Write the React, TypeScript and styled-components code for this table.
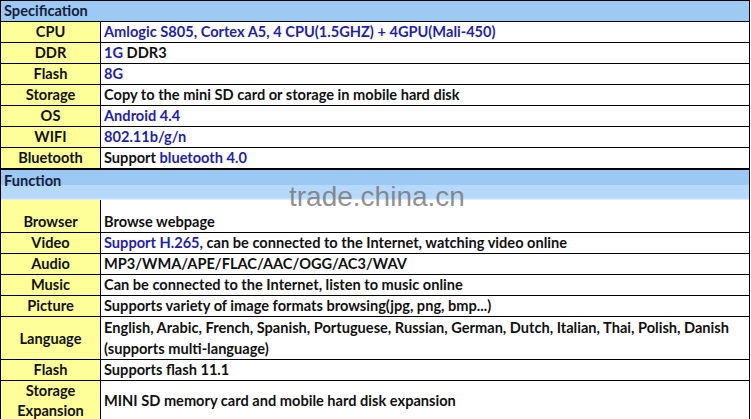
import React from 'react'
import styled, { createGlobalStyle } from 'styled-components'

const GlobalStyle = createGlobalStyle`
    html, body {
        margin: 0;
        padding: 0;
        background: #FFFFFF;
    }
    body {
        font-family: Lato, 'Open Sans', sans-serif;
        width: 751px;
        height: 419px;
        overflow: hidden;
    }
`

type SpecRowType = {
    label: Array<string>
    value: Array<React.ReactNode>
    lineHeight?: number
}

const Sheet = styled.div`
    position: relative;
    width: 750px;
    border-left: 1px solid #000;
    border-right: 1px solid #000;
    box-sizing: border-box;
    font-size: 14.6px;
    font-weight: 700;
    color: #111;
`

const SectionHeader = styled.div<{ $first?: boolean }>`
    height: ${props => props.$first ? '20px' : '30px'};
    border-top: 1px solid #000;
    border-bottom: ${props => props.$first ? '1px solid #000' : 'none'};
    padding-left: 3px;
    line-height: ${props => props.$first ? '20px' : '21px'};
    color: #14203a;
    background: ${props => props.$first
        ? '#9dc9f5'
        : 'linear-gradient(#9cc8f4 0, #9cc8f4 15px, #b6d8fa 15px, #b6d8fa 28px, #e8f2fd 30px)'};
`

const Row = styled.div<{ $open?: boolean; $height?: number; $line?: number }>`
    display: grid;
    grid-template-columns: 100px 1fr;
    min-height: ${props => props.$height ?? 20}px;
    border-bottom: ${props => props.$open ? 'none' : '1px solid #000'};
    line-height: ${props => props.$line ?? 20}px;
`

const Label = styled.div`
    display: flex;
    flex-direction: column;
    justify-content: center;
    align-items: center;
    text-align: center;
    background: #ffff99;
    border-right: 1px solid #000;
`

const Value = styled.div`
    display: flex;
    flex-direction: column;
    justify-content: center;
    padding-left: 3px;
    white-space: nowrap;
`

const Hl = styled.span`
    color: #1f1fae;
`

const Watermark = styled.div`
    position: absolute;
    left: 288px;
    top: 181px;
    font-family: 'Liberation Sans', Arial, sans-serif;
    font-size: 28px;
    font-weight: 400;
    color: rgba(110, 110, 110, 0.75);
    pointer-events: none;
`

const specification: Array<SpecRowType> = [
    { label: ['CPU'], value: [<Hl>Amlogic S805, Cortex A5, 4 CPU(1.5GHZ) + 4GPU(Mali-450)</Hl>] },
    { label: ['DDR'], value: [<><Hl>1G</Hl> DDR3</>] },
    { label: ['Flash'], value: [<Hl>8G</Hl>] },
    { label: ['Storage'], value: ['Copy to the mini SD card or storage in mobile hard disk'] },
    { label: ['OS'], value: [<Hl>Android 4.4</Hl>] },
    { label: ['WIFI'], value: [<Hl>802.11b/g/n</Hl>] },
    { label: ['Bluetooth'], value: [<>Support <Hl>bluetooth 4.0</Hl></>] },
]

const functions: Array<SpecRowType> = [
    { label: ['Browser'], value: ['Browse webpage'] },
    { label: ['Video'], value: [<><Hl>Support H.265,</Hl> can be connected to the Internet, watching video online</>] },
    { label: ['Audio'], value: ['MP3/WMA/APE/FLAC/AAC/OGG/AC3/WAV'] },
    { label: ['Music'], value: ['Can be connected to the Internet, listen to music online'] },
    { label: ['Picture'], value: ['Supports variety of image formats browsing(jpg, png, bmp...)'] },
    {
        label: ['Language'],
        lineHeight: 21,
        value: [
            'English, Arabic, French, Spanish, Portuguese, Russian, German, Dutch, Italian, Thai, Polish, Danish',
            '(supports multi-language)'
        ]
    },
    { label: ['Flash'], value: ['Supports flash 11.1'] },
    { label: ['Storage', 'Expansion'], value: ['MINI SD memory card and mobile hard disk expansion'] },
]

const renderRow = (row: SpecRowType, index: number) => {
    const line = row.lineHeight ?? 20
    return (
        <Row key={index} $line={line} $height={Math.max(row.label.length, row.value.length) * line}>
            <Label>
                {row.label.map((text, i) => <span key={i}>{text}</span>)}
            </Label>
            <Value>
                {row.value.map((text, i) => <span key={i}>{text}</span>)}
            </Value>
        </Row>
    )
}

const App: React.FC = () => {
    return (
        <>
            <GlobalStyle />
            <Sheet>
                <SectionHeader $first>Specification</SectionHeader>
                {specification.map(renderRow)}
                <SectionHeader>Function</SectionHeader>
                <Row $open $height={12}>
                    <Label />
                    <Value />
                </Row>
                {functions.map(renderRow)}
                <Watermark>trade.china.cn</Watermark>
            </Sheet>
        </>
    )
}

export default App
